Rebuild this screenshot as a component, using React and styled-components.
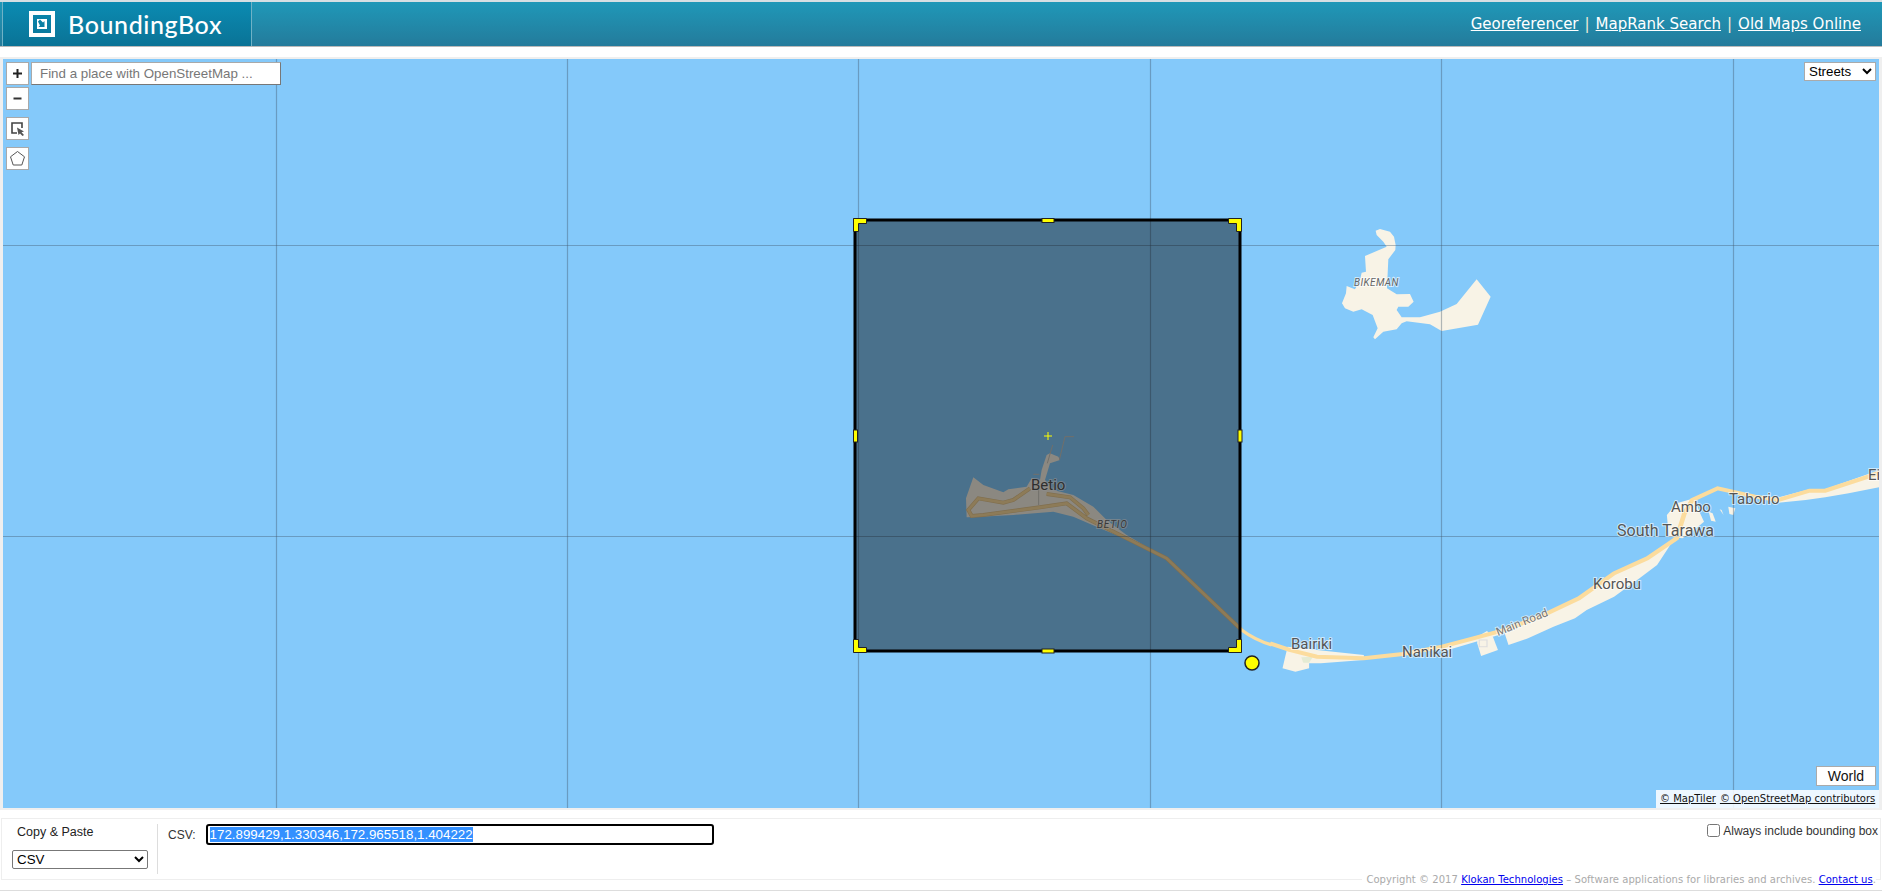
import React, { useEffect, useRef } from 'react';
import styled, { createGlobalStyle } from 'styled-components';

const GlobalStyle = createGlobalStyle`
  html, body {
    margin: 0;
    padding: 0;
    background: #fff;
    overflow: hidden;
  }
  body {
    font-family: "Liberation Sans", Arial, sans-serif;
  }
`;

const Page = styled.div`
  width: 1882px;
  height: 892px;
  display: flex;
  flex-direction: column;
  overflow: hidden;
`;

const Header = styled.header`
  height: 44px;
  margin-top: 2px;
  display: flex;
  justify-content: space-between;
  align-items: center;
  background: linear-gradient(#1f98b8, #247b9b);
  border-bottom: 1px solid #b9b9b9;
  box-shadow: 0 -2px 0 #d5dfe3;
`;

const LogoTile = styled.div`
  width: 250px;
  height: 100%;
  margin-left: 2px;
  padding-left: 26px;
  box-sizing: border-box;
  display: flex;
  align-items: center;
  gap: 13px;
  background: linear-gradient(#0b8bb2, #0a7396);
  border-left: 1px solid #6fb2c6;
  border-right: 1px solid #6fb2c6;
`;

const LogoText = styled.span`
  font-family: Lato, sans-serif;
  font-size: 25px;
  font-weight: 500;
  letter-spacing: 0.6px;
  color: #fff;
`;

const Nav = styled.nav`
  padding-right: 21px;
  font-family: "DejaVu Sans", sans-serif;
  font-size: 15px;
  color: #f4ecd8;
  display: flex;
  gap: 6px;
`;

const NavLink = styled.a`
  color: #fff;
  text-decoration: underline;
`;

const MapFrame = styled.div`
  height: 749px;
  margin-top: 10px;
  padding: 2px 3px;
  background: #efefef;
`;

const MapCanvas = styled.div`
  position: relative;
  width: 1876px;
  height: 749px;
  overflow: hidden;
  background: #84c9fa;
`;

const MapDrawing = styled.svg`
  display: block;
  font-family: Roboto, sans-serif;
`;

const Controls = styled.div`
  position: absolute;
  left: 3px;
  top: 3px;
  display: flex;
  flex-direction: column;
`;

const ToolButton = styled.button`
  width: 23px;
  height: 23px;
  margin-top: ${(p) => p.$gap}px;
  padding: 0;
  display: flex;
  align-items: center;
  justify-content: center;
  box-sizing: border-box;
  background: #fff;
  border: 1px solid #a9a9a9;
`;

const SearchInput = styled.input`
  position: absolute;
  left: 28px;
  top: 3px;
  width: 250px;
  height: 23px;
  padding: 0 8px;
  box-sizing: border-box;
  font-family: "Liberation Sans", sans-serif;
  font-size: 13.33px;
  background: #fff;
  border: 1px solid #a9a9a9;
  border-bottom-color: #777;
  border-right-color: #777;
  border-radius: 0;
  outline: none;
  &::placeholder {
    color: #777;
    opacity: 1;
  }
`;

const LayerSelect = styled.select`
  position: absolute;
  right: 3px;
  top: 3px;
  width: 72px;
  height: 19px;
  padding: 0;
  font-family: "Liberation Sans", sans-serif;
  font-size: 13.33px;
  background: #fff;
  border: 1px solid #aaa;
  border-radius: 0;
`;

const WorldButton = styled.button`
  position: absolute;
  right: 3px;
  bottom: 22px;
  width: 60px;
  height: 20px;
  padding: 0;
  box-sizing: border-box;
  font-family: "Liberation Sans", sans-serif;
  font-size: 14px;
  color: #111;
  background: #fff;
  border: 1px solid #aaa;
`;

const Attribution = styled.div`
  position: absolute;
  right: 0;
  bottom: 0;
  width: 223px;
  height: 18px;
  box-sizing: border-box;
  padding: 3px 0 0 4px;
  font-family: "DejaVu Sans", sans-serif;
  font-size: 10px;
  white-space: nowrap;
  background: rgba(255, 255, 255, 0.85);
`;

const AttributionLink = styled.a`
  margin-right: 4px;
  color: #111;
  text-decoration: underline;
`;

const Panel = styled.section`
  height: 60px;
  margin: 8px 1px 0 1px;
  display: flex;
  border: 1px solid #eeeeee;
`;

const FormatColumn = styled.div`
  width: 145px;
  margin: 5px 0;
  padding-left: 10px;
  border-right: 1px solid #ddd;
`;

const PanelTitle = styled.div`
  padding: 1px 0 0 5px;
  font-size: 12.5px;
  line-height: 14px;
  font-weight: 500;
  color: #222;
`;

const FormatSelect = styled.select`
  display: block;
  width: 136px;
  height: 19px;
  margin-top: 11px;
  padding: 0;
  font-family: "Liberation Sans", sans-serif;
  font-size: 13.33px;
  background: #fff;
  border: 1px solid #777;
  border-radius: 2px;
`;

const CsvRow = styled.div`
  flex: 1;
  padding: 5px 0 0 10px;
  display: flex;
  align-items: flex-start;
  gap: 10px;
`;

const CsvLabel = styled.label`
  padding-top: 4px;
  font-size: 12px;
  line-height: 14px;
  color: #333;
`;

const CsvInput = styled.input`
  width: 508px;
  height: 21px;
  padding: 0 2px;
  box-sizing: border-box;
  font-family: "Liberation Sans", sans-serif;
  font-size: 13.33px;
  color: #000;
  border: 2px solid #000;
  border-radius: 3px;
  outline: none;
  &::selection {
    background: #3390ff;
    color: #fff;
  }
`;

const IncludeLabel = styled.label`
  padding: 5px 2px 0 0;
  display: flex;
  align-items: flex-start;
  gap: 3px;
  font-size: 12px;
  line-height: 14px;
  color: #333;
`;

const IncludeBox = styled.input`
  width: 13px;
  height: 13px;
  margin: 0;
`;

const Footer = styled.footer`
  margin-top: -7px;
  height: 17px;
  display: flex;
  justify-content: flex-end;
  align-items: flex-start;
  padding-right: 6px;
  border-bottom: 1px solid #ddd;
`;

const FooterText = styled.div`
  padding-left: 4px;
  font-family: "DejaVu Sans", sans-serif;
  font-size: 10px;
  line-height: 14px;
  letter-spacing: 0.05px;
  color: #aaa;
  background: #fff;
`;

const FooterLink = styled.a`
  color: #00e;
  text-decoration: underline;
`;

const cream = '#f8f3e6';
const road = '#fcdc9d';

const bikeman =
  '407,92 420,87 450,95 462,110 467,135 466,150 445,178 441,265 470,283 510,282 521,305 505,320 475,320 470,330 485,352 540,352 600,335 650,312 710,238 752,290 714,374 605,393 570,373 500,364 485,370 470,388 430,395 405,418 400,412 413,385 398,345 365,328 340,335 315,325 306,310 318,280 320,258 345,268 360,240 365,218 378,215 375,168 440,140 430,125 410,105';

const betio =
  '100,172 130,195 190,217 205,208 260,200 275,175 300,180 305,150 320,105 330,100 355,110 360,120 330,130 315,180 340,210 400,225 460,260 500,300 560,345 620,380 625,390 560,358 480,325 400,290 340,275 220,285 120,290 80,292 78,235';

const betioRoad =
  'M270 205L220 240L190 248L115 235L85 270L95 288L130 285L300 262L380 250L440 295L540 345L630 390L680 415L905 630M320 222L390 232L430 265L445 285';

const tarawaLand = [
  '45,590 120,600 240,615 240,630 130,640 100,640 100,655 65,665 32,655 38,625',
  '430,590 600,540 600,550 440,605',
  '600,550 700,495 790,445 880,370 965,325 1035,265 990,345 945,385 880,440 810,480 780,505 725,530 660,565 610,585',
  '530,560 555,543 570,560 583,600 540,618 530,580',
  '1015,195 1040,160 1085,145 1100,190 1110,215 1090,235 1055,265 1020,260',
  '1122,185 1132,190 1140,215 1128,212',
  '1172,170 1190,175 1185,195 1175,192',
  '1150,178 1155,180 1160,195',
  '1290,145 1380,118 1420,118 1530,72 1565,58 1565,110 1480,130 1420,142 1370,150 1300,158',
];

const tarawaRoad =
  'M0 580L50 600L120 620L240 625L340 612L440 590L520 565L600 540L700 495L790 445L880 370L965 325L1040 265L1060 190L1080 150L1145 115L1240 140L1300 150L1380 122L1420 122L1530 80L1565 65';

// map labels sit under the box tint, the halo is only a thick pale stroke
const Label = ({ x, y, size = 15, color = '#555', rotate, italic, spacing, children }) => (
  <text
    x={x}
    y={y}
    fontSize={size}
    fill={color}
    stroke="rgba(255,255,255,0.6)"
    strokeWidth="2"
    paintOrder="stroke"
    fontStyle={italic ? 'italic' : undefined}
    letterSpacing={spacing}
    transform={rotate ? `rotate(${rotate} ${x} ${y})` : undefined}
  >
    {children}
  </text>
);

const Handle = ({ x, y, w, h }) => (
  <rect x={x} y={y} width={w} height={h} fill="#ff0" stroke="#222" strokeWidth="1" />
);

const Corner = ({ d }) => <path d={d} fill="#ff0" stroke="#222" strokeWidth="1" />;

const MapArt = () => (
  <MapDrawing width="1876" height="749" viewBox="3 59 1876 749">
    <g transform="translate(1240 200) scale(0.3333)">
      <polygon points={bikeman} fill={cream} />
    </g>
    <g transform="translate(940 420) scale(0.3333)">
      <polygon points={betio} fill={cream} />
      <path d="M375 50H402M375 50L358 120M338 75L322 130M280 163H298M296 205V255" fill="none" stroke="#c9c6bd" strokeWidth="3" />
      <path d={betioRoad} fill="none" stroke="#e3c48c" strokeWidth="12" />
      <path d={betioRoad} fill="none" stroke={road} strokeWidth="8" />
      <path d="M905 630Q945 660 995 675" fill="none" stroke={road} strokeWidth="10" />
    </g>
    <g transform="translate(1270 450) scale(0.391 0.3333)">
      {tarawaLand.map((points) => (
        <polygon key={points} points={points} fill={cream} />
      ))}
      <polygon points="80,622 110,620 100,638 85,638" fill="#e5ebd3" />
      <path d="M535 570H555V590H535Z" fill="none" stroke="#ddd" strokeWidth="3" />
      <path d={tarawaRoad} fill="none" stroke={road} strokeWidth="12" />
    </g>

    <g stroke="#40586c" strokeOpacity="0.4" strokeWidth="1.2">
      {[276.5, 567.5, 858.5, 1150.5, 1441.5, 1733.5].map((x) => (
        <line key={x} x1={x} y1="59" x2={x} y2="808" />
      ))}
      {[245.5, 536.5].map((y) => (
        <line key={y} x1="0" y1={y} x2="1882" y2={y} />
      ))}
    </g>

    <Label x={1031} y={490}>Betio</Label>
    <Label x={1097} y={528} size={10} color="#666" italic spacing="0.8">BETIO</Label>
    <Label x={1354} y={286} size={10} color="#666" italic spacing="0.4">BIKEMAN</Label>
    <Label x={1291} y={649}>Bairiki</Label>
    <Label x={1402} y={657}>Nanikai</Label>
    <Label x={1498} y={636} size={11.5} color="#777" rotate={-22}>Main Road</Label>
    <Label x={1593} y={589}>Korobu</Label>
    <Label x={1617} y={536} size={16}>South Tarawa</Label>
    <Label x={1671} y={512}>Ambo</Label>
    <Label x={1729} y={504}>Taborio</Label>
    <Label x={1868} y={480}>Ei</Label>

    <rect x="855" y="220" width="385" height="431" fill="rgba(0,0,0,0.44)" stroke="#000" strokeWidth="3" />
    <path d="M1048 432V440M1044 436H1052" stroke="#ff0" strokeWidth="1" />
    <Corner d="M853.5 218.5H866.5V223.5H858.5V231.5H853.5Z" />
    <Corner d="M1228.5 218.5H1241.5V231.5H1236.5V223.5H1228.5Z" />
    <Corner d="M853.5 652.5H866.5V647.5H858.5V639.5H853.5Z" />
    <Corner d="M1228.5 652.5H1241.5V639.5H1236.5V647.5H1228.5Z" />
    <Handle x={1042} y={218.5} w={12} h={4} />
    <Handle x={1042} y={649} w={12} h={4} />
    <Handle x={853.5} y={430} w={4} h={12} />
    <Handle x={1238} y={430} w={4} h={12} />
    <circle cx="1252" cy="663" r="7" fill="#ff0" stroke="#222" strokeWidth="1.5" />
  </MapDrawing>
);

const LogoIcon = () => (
  <svg width="26" height="26" viewBox="0 0 26 26">
    <rect x="2" y="2" width="22" height="22" fill="none" stroke="#fff" strokeWidth="4" />
    <rect x="8" y="8" width="10" height="10" fill="#fff" />
    <path d="M8.5 9.5L10.5 7.5L13.5 10.5L15 9V15H9L10.5 13.5Z" fill="#0a7fa4" transform="translate(0.5 1)" />
  </svg>
);

const SelectIcon = () => (
  <svg width="17" height="17" viewBox="0 0 17 17">
    <path d="M8 13H3V3H13V8" fill="none" stroke="#444" strokeWidth="1.6" />
    <path d="M8 7.5L15 11.5L12.5 12.2L15 15L13.5 16L11 13.5L9.5 15Z" fill="#555" />
  </svg>
);

const PolygonIcon = () => (
  <svg width="17" height="17" viewBox="0 0 17 17">
    <path d="M8.5 1.5L15.5 6.8L12.8 15H4.2L1.5 6.8Z" fill="none" stroke="#555" strokeWidth="1" />
  </svg>
);

const App = () => {
  const csvRef = useRef(null);

  useEffect(() => {
    csvRef.current.focus();
    csvRef.current.select();
  }, []);

  return (
    <Page>
      <GlobalStyle />
      <Header>
        <LogoTile>
          <LogoIcon />
          <LogoText>BoundingBox</LogoText>
        </LogoTile>
        <Nav>
          <NavLink href="#">Georeferencer</NavLink>|
          <NavLink href="#">MapRank Search</NavLink>|
          <NavLink href="#">Old Maps Online</NavLink>
        </Nav>
      </Header>
      <MapFrame>
        <MapCanvas>
          <MapArt />
          <Controls>
            <ToolButton $gap={0}>
              <svg width="11" height="11" viewBox="0 0 11 11">
                <path d="M5.5 1V10M1 5.5H10" stroke="#222" strokeWidth="2" />
              </svg>
            </ToolButton>
            <ToolButton $gap={2}>
              <svg width="11" height="11" viewBox="0 0 11 11">
                <path d="M1.5 5.5H9.5" stroke="#333" strokeWidth="2" />
              </svg>
            </ToolButton>
            <ToolButton $gap={7}>
              <SelectIcon />
            </ToolButton>
            <ToolButton $gap={7}>
              <PolygonIcon />
            </ToolButton>
          </Controls>
          <SearchInput placeholder="Find a place with OpenStreetMap ..." />
          <LayerSelect defaultValue="Streets">
            <option>Streets</option>
          </LayerSelect>
          <WorldButton>World</WorldButton>
          <Attribution>
            <AttributionLink href="#">© MapTiler</AttributionLink>
            <AttributionLink href="#">© OpenStreetMap contributors</AttributionLink>
          </Attribution>
        </MapCanvas>
      </MapFrame>
      <Panel>
        <FormatColumn>
          <PanelTitle>Copy &amp; Paste</PanelTitle>
          <FormatSelect defaultValue="CSV">
            <option>CSV</option>
          </FormatSelect>
        </FormatColumn>
        <CsvRow>
          <CsvLabel>CSV:</CsvLabel>
          <CsvInput ref={csvRef} readOnly value="172.899429,1.330346,172.965518,1.404222" />
        </CsvRow>
        <IncludeLabel>
          <IncludeBox type="checkbox" />
          Always include bounding box
        </IncludeLabel>
      </Panel>
      <Footer>
        <FooterText>
          Copyright © 2017 <FooterLink href="#">Klokan Technologies</FooterLink> – Software applications for libraries and archives. <FooterLink href="#">Contact us</FooterLink>.
        </FooterText>
      </Footer>
    </Page>
  );
};

export default App;
